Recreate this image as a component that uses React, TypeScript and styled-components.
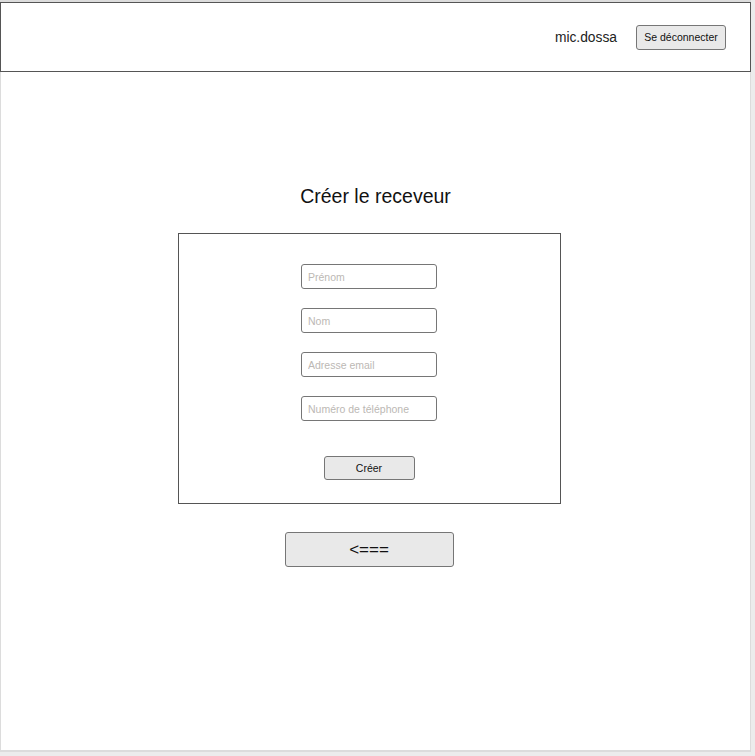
import styled, { createGlobalStyle } from "styled-components"

const GlobalStyle = createGlobalStyle`
  html, body {
    margin: 0;
    padding: 0;
    background: #ececec;
    font-family: "Liberation Sans", Arial, sans-serif;
  }
`

const Frame = styled.div`
  width: 751px;
  height: 752px;
  padding-top: 2px;
  box-sizing: border-box;
  background: #fff;
  box-shadow: inset 1px 0 0 #dcdcdc, inset 0 2px 0 #dcdcdc, inset -1px 0 0 #dcdcdc, inset 0 -2px 0 #dcdcdc;
  display: flex;
  flex-direction: column;
`

const Header = styled.header`
  height: 70px;
  box-sizing: border-box;
  border: 1px solid #555;
  display: flex;
  align-items: center;
  justify-content: flex-end;
  gap: 19px;
  padding-right: 24px;
`

const UserName = styled.span`
  font-size: 13.8px;
  color: #222;
`

const Button = styled.button<{ $big?: boolean }>`
  font-family: "Liberation Sans", Arial, sans-serif;
  font-size: ${(p) => (p.$big ? "17px" : "10.5px")};
  color: #111;
  background: #e9e9e9;
  border: 1px solid #767676;
  border-radius: 3px;
  padding: 0 4px;
  box-sizing: border-box;
  white-space: nowrap;
  cursor: pointer;
`

const LogoutButton = styled(Button)`
  width: 90px;
  height: 25px;
`

const Title = styled.h2`
  margin: 113px 0 0;
  font-size: 19.5px;
  line-height: 22px;
  font-weight: normal;
  color: #111;
  text-align: center;
`

const Column = styled.div`
  display: flex;
  flex-direction: column;
  align-items: center;
  padding-right: 13px;
  margin-top: 26px;
`

const FormBox = styled.form`
  width: 383px;
  height: 271px;
  box-sizing: border-box;
  border: 1px solid #555;
  padding: 30px 0 23px;
  display: flex;
  flex-direction: column;
  align-items: center;
`

const Fields = styled.div`
  display: flex;
  flex-direction: column;
  gap: 19px;
`

const Field = styled.input`
  width: 136px;
  height: 25px;
  box-sizing: border-box;
  border: 1px solid #767676;
  border-radius: 3px;
  padding: 0 6px;
  font-family: "Liberation Sans", Arial, sans-serif;
  font-size: 10.5px;
  color: #222;
  outline: none;

  &::placeholder {
    color: #bcb8b4;
  }
`

const SubmitButton = styled(Button)`
  width: 91px;
  height: 24px;
  margin-top: 35px;
`

const BackButton = styled(Button)`
  width: 169px;
  height: 35px;
  margin-top: 28px;
`

const fields = ["Prénom", "Nom", "Adresse email", "Numéro de téléphone"]

function App() {
  return (
    <>
      <GlobalStyle />
      <Frame>
        <Header>
          <UserName>mic.dossa</UserName>
          <LogoutButton>Se déconnecter</LogoutButton>
        </Header>
        <Title>Créer le receveur</Title>
        <Column>
          <FormBox onSubmit={(e) => e.preventDefault()}>
            <Fields>
              {fields.map((f) => (
                <Field key={f} placeholder={f} />
              ))}
            </Fields>
            <SubmitButton type="submit">Créer</SubmitButton>
          </FormBox>
          <BackButton $big>&lt;===</BackButton>
        </Column>
      </Frame>
    </>
  )
}

export default App
